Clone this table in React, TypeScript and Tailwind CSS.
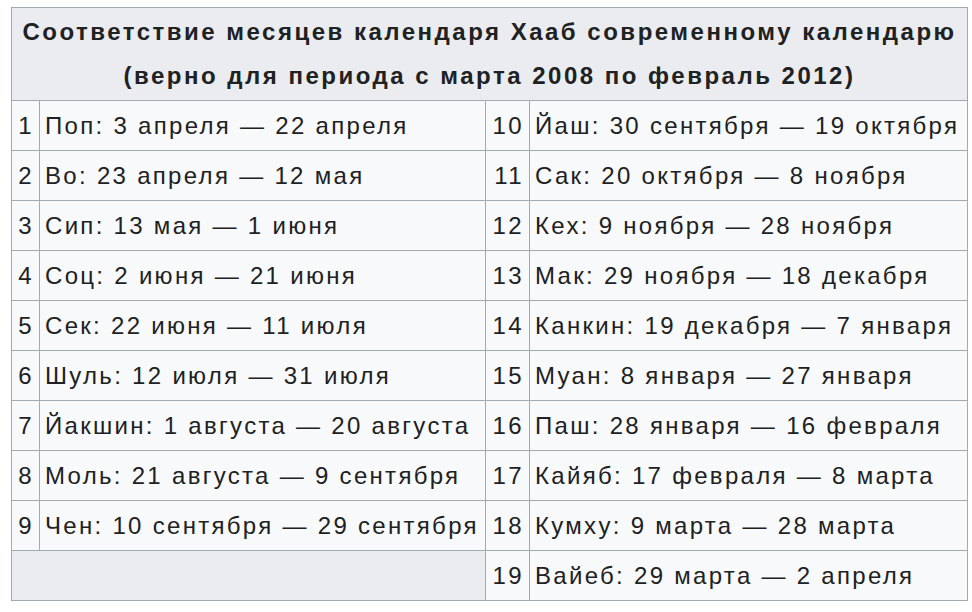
const left = [
  ["1", "Поп: 3 апреля — 22 апреля"],
  ["2", "Во: 23 апреля — 12 мая"],
  ["3", "Сип: 13 мая — 1 июня"],
  ["4", "Соц: 2 июня — 21 июня"],
  ["5", "Сек: 22 июня — 11 июля"],
  ["6", "Шуль: 12 июля — 31 июля"],
  ["7", "Йакшин: 1 августа — 20 августа"],
  ["8", "Моль: 21 августа — 9 сентября"],
  ["9", "Чен: 10 сентября — 29 сентября"],
];

const right = [
  ["10", "Йаш: 30 сентября — 19 октября"],
  ["11", "Сак: 20 октября — 8 ноября"],
  ["12", "Кех: 9 ноября — 28 ноября"],
  ["13", "Мак: 29 ноября — 18 декабря"],
  ["14", "Канкин: 19 декабря — 7 января"],
  ["15", "Муан: 8 января — 27 января"],
  ["16", "Паш: 28 января — 16 февраля"],
  ["17", "Кайяб: 17 февраля — 8 марта"],
  ["18", "Кумху: 9 марта — 28 марта"],
  ["19", "Вайеб: 29 марта — 2 апреля"],
];

const cell = "border border-[#a2a9b1] bg-[#f8f9fa] h-[50px] p-0 align-middle";
const num = cell + " text-right pr-[5px] tracking-[2.4px]";
const txt = cell + " text-left pl-[5px] whitespace-nowrap";

export default function App() {
  return (
    <div className="w-[972px] h-[612px] bg-white pt-[7px] pl-[11px] font-['Liberation_Sans',Arial,sans-serif] text-[#202122]">
      <table className="table-fixed border-collapse w-[956px] text-[24px] tracking-[2.3px] leading-none">
        <colgroup>
          <col className="w-[28px]" />
          <col className="w-[446px]" />
          <col className="w-[44px]" />
          <col className="w-[438px]" />
        </colgroup>
        <thead>
          <tr>
            <th
              colSpan={4}
              className="border border-[#a2a9b1] bg-[#eaecf0] h-[93px] font-bold text-[24px] leading-[44px] tracking-[2.5px] text-center"
            >
              Соответствие месяцев календаря Хааб современному календарю
              <br />
              (верно для периода с марта 2008 по февраль 2012)
            </th>
          </tr>
        </thead>
        <tbody>
          {right.map((r, i) => (
            <tr key={r[0]}>
              {i < left.length ? (
                <>
                  <td className={num}>{left[i][0]}</td>
                  <td className={txt}>{left[i][1]}</td>
                </>
              ) : (
                <td colSpan={2} className="border border-[#a2a9b1] bg-[#eaecf0] h-[50px] p-0" />
              )}
              <td className={num}>{r[0]}</td>
              <td className={txt}>{r[1]}</td>
            </tr>
          ))}
        </tbody>
      </table>
    </div>
  );
}
